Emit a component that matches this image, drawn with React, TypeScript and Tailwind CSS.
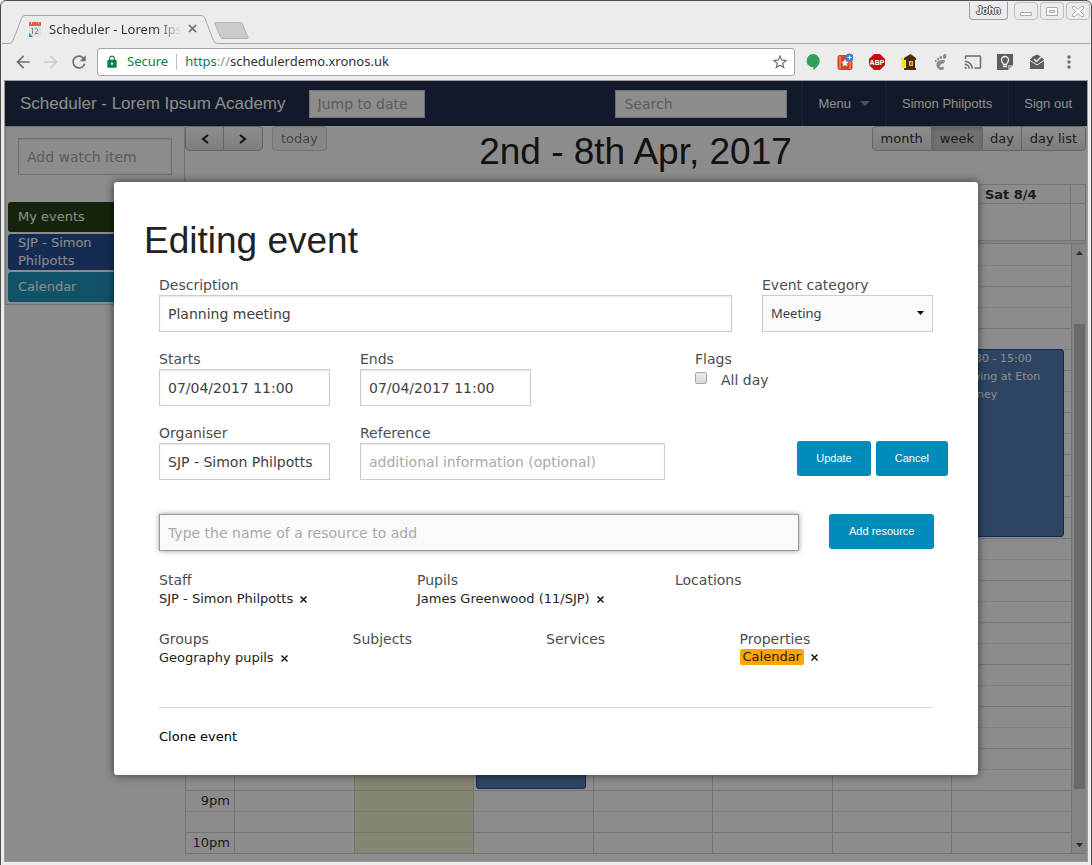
import React from "react";
import { MdArrowBack, MdArrowForward, MdRefresh, MdLock, MdMoreVert, MdStarBorder, MdCast } from "react-icons/md";

const COLS = "grid-cols-[49px_repeat(7,minmax(0,1fr))_15px]";
const DAYS = ["Sun 2/4", "Mon 3/4", "Tue 4/4", "Wed 5/4", "Thu 6/4", "Fri 7/4", "Sat 8/4"];
const HOURS = ["8am", "9am", "10am", "11am", "12pm", "1pm", "2pm", "3pm", "4pm", "5pm", "6pm", "7pm", "8pm", "9pm", "10pm"];

const CHROME_FONT = "font-['Noto_Sans',sans-serif]";
const ARIAL = "font-['Liberation_Sans',sans-serif]";
const FIELD =
  "block h-[37px] w-full border border-[#cccccc] bg-white px-2 text-sm text-[#404040] shadow-[inset_0_1px_2px_rgba(0,0,0,0.1)] outline-none placeholder:text-[#a9a9a9]";
const NAV_FIELD =
  "h-7 border border-[#cccccc] bg-white px-2 font-['DejaVu_Sans',sans-serif] text-sm placeholder:text-[#a9a9a9]";
const LABEL = "block pt-[2px] text-sm leading-[19px] text-[#4d4d4d]";

function TabStrip() {
  return (
    <div className="relative flex h-[42px] items-end">
      <svg className="absolute bottom-0 left-0 h-[29px] w-full" aria-hidden="true">
        <path d="M0 28.500H7q3 0 4-3L19.500 3.500Q20.800.5 23 .5H199.500q2.500 0 3.500 3L211.500 25.500q1 3 4 3H2000V30H0z" fill="#ececec" stroke="#a6a6a6" />
        <path d="M213.500 7.500H238q2 0 2.500 1.500l5.500 13q.5 1.500-1.500 1.500H221q-2 0-2.500-1.500l-5.500-13q-.5-1.500.5-1.500z" fill="#cbcbcb" stroke="#b2b2b2" />
      </svg>
      <div className={`relative flex h-[29px] items-center pb-[2px] pl-[27px] ${CHROME_FONT}`}>
        <svg width="12" height="16" viewBox="0 0 12 16" aria-hidden="true">
          <path d="M0 2h12v14H0z" fill="#e2e2e2" />
          <path d="M0 1h12v4H0z" fill="#df5f4c" />
          <path d="M2 0h1v3H2zM9 0h1v3H9z" fill="#f7cbc3" />
          <path d="M0 12v4h4z" fill="#3c88b5" />
          <path d="M2.500 8l1-1v6M6 8q1.500-1.500 2.500 0T6 12.500h3" fill="none" stroke="#858585" />
        </svg>
        <span className="ml-2 bg-linear-to-r from-[#303030] from-80% to-transparent bg-clip-text text-[13px] leading-5 whitespace-nowrap text-transparent">
          Scheduler - Lorem Ips
        </span>
        <button aria-label="Close tab" className="ml-[6px]">
          <svg width="9" height="9" viewBox="0 0 9 9" aria-hidden="true">
            <path d="M1 1l7 7M8 1l-7 7" stroke="#6a6a6a" strokeWidth="1.700" />
          </svg>
        </button>
      </div>
      <div className={`absolute top-0 right-0 flex items-start gap-[2px] ${ARIAL}`}>
        <button className="mr-1 h-[18px] w-[39px] rounded-b border border-t-0 border-[#9d9d9d] text-[10px] leading-[18px] font-bold text-white [text-shadow:1px_0_#4a4a4a,-1px_0_#4a4a4a,0_1px_#4a4a4a,0_-1px_#4a4a4a]">
          John
        </button>
        {[
          <path key="a" d="M5.500 9.500h11v3h-11z" />,
          <path key="b" d="M5.500 4.500h11v8h-11zM8.500 7.500h5v2h-5z" />,
          <path key="c" d="M5.500 3.500h2.500l3 3 3-3h2.500v2l-3 3 3 3v2H14l-3-3-3 3H5.500v-2l3-3-3-3z" />,
        ].map((shape, i) => (
          <button key={i} aria-label={["Minimise", "Maximise", "Close"][i]} className="h-[18px] w-6 rounded-sm border border-[#bebebe]">
            <svg width="22" height="16" viewBox="0 0 22 16" fill="#fafafa" stroke="#ababab" aria-hidden="true">
              {shape}
            </svg>
          </button>
        ))}
      </div>
    </div>
  );
}

function Extensions() {
  return (
    <div className="flex items-center gap-4 text-[#6b6b6b]">
      <svg width="16" height="18" viewBox="0 0 16 18" aria-label="Hangouts">
        <path d="M8 1a6.700 6.700 0 0 1 6.700 6.700C14.700 12 11 15 8.500 17v-2.600A6.700 6.700 0 1 1 8 1z" fill="#2fa05a" />
      </svg>
      <svg width="16" height="18" viewBox="0 0 16 18" aria-label="Bookmarks">
        <rect x=".5" y="2" width="15" height="15" rx="2.500" fill="#d84325" />
        <path d="M3 3v13M13 3v13" stroke="#f3a890" />
        <path d="M8 6l1.200 2.500 2.600.3-1.900 1.900.5 2.700L8 12l-2.400 1.400.5-2.700-1.900-1.900 2.600-.3z" fill="#fff" />
        <circle cx="12.500" cy="4.500" r="4" fill="#2d86de" />
        <path d="M12.500 2.500v4M10.500 4.500h4" stroke="#fff" />
      </svg>
      <svg width="16" height="16" viewBox="0 0 16 16" aria-label="Ad block">
        <path d="M5 0h6l5 5v6l-5 5H5l-5-5V5z" fill="#c70d0c" />
        <text x="8" y="10.800" textAnchor="middle" fontSize="7" fontWeight="700" fill="#fff" fontFamily="Liberation Sans">ABP</text>
      </svg>
      <svg width="16" height="18" viewBox="0 0 16 18" aria-label="Lantern">
        <path d="M0 4l3 2 2 2v5l-3 2-2 1 1-3-1-2 1-2-1-2z" fill="#f7e018" />
        <path d="M9.500 1l5.500 4v2h-1v8h1v2H3v-2h2V7H3V5z" fill="#4a2c0b" />
        <path d="M8 8h4v5H8z" fill="#e3c320" />
        <path d="M9 9h2v3H9z" fill="#4a2c0b" />
        <path d="M9.500 9h1v3h-1z" fill="#e3c320" />
      </svg>
      <svg width="16" height="18" viewBox="0 0 16 18" fill="#8a8a8a" aria-label="Gnome">
        <ellipse cx="11.800" cy="3.500" rx="1.700" ry="2.600" transform="rotate(15 12 3)" />
        <ellipse cx="7.800" cy="4.500" rx="1.200" ry="1.800" />
        <ellipse cx="5" cy="6" rx="1" ry="1.500" transform="rotate(-15 5 6)" />
        <ellipse cx="2.800" cy="8" rx=".8" ry="1.200" transform="rotate(-25 3 8)" />
        <path d="M12 8c0-1.500-8-1.500-8.500 3-.4 3.500 2.500 6 5 6s3-2.500 2-3c-1.500-.7-2 .8-3.200.2-1.500-1 0-2.700 1.500-3.200S12 9.500 12 8z" />
      </svg>
      <MdCast size={18} className="-mx-px" aria-label="Cast" />
      <svg width="16" height="16" viewBox="0 0 16 16" aria-label="Keep">
        <path d="M0 0h16v11l-5 5H0z" fill="#5d5d5d" />
        <path d="M11 16v-5h5z" fill="#a8a8a8" />
        <path d="M6 12.500h4M6.500 10.500h3c0-1.500 2-2 2-4.500a3.500 3.500 0 0 0-7 0c0 2.500 2 3 2 4.500z" fill="none" stroke="#f4f4f4" strokeWidth="1.300" />
      </svg>
      <svg width="16" height="18" viewBox="0 0 16 18" aria-label="Inbox">
        <path d="M1 6.500l3-2.500h8l3 2.500V16H1z" fill="#5d5d5d" />
        <path d="M3 8V4l5-2.500L13 4v4l-5 3z" fill="#5d5d5d" />
        <path d="M1 7.500l7 4.500 7-4.500" fill="none" stroke="#ececec" />
        <path d="M5 6l2.500 2.500L13 3" fill="none" stroke="#ececec" strokeWidth="1.500" />
      </svg>
      <MdMoreVert size={20} className="-mx-[2px]" aria-label="More" />
    </div>
  );
}

function Toolbar() {
  return (
    <div className={`flex h-9 items-center pr-[13px] pl-[11px] ${CHROME_FONT}`}>
      <button aria-label="Back"><MdArrowBack size={20} color="#6e6e6e" /></button>
      <button aria-label="Forward" className="ml-2"><MdArrowForward size={20} color="#cdcdcd" /></button>
      <button aria-label="Reload" className="ml-2"><MdRefresh size={20} color="#6e6e6e" /></button>
      <div className="mr-[10px] ml-2 flex h-7 min-w-0 flex-1 items-center rounded-[3px] border border-[#a5a5a5] bg-white pr-[5px] pl-[7px] text-[13px]">
        <MdLock size={14} color="#0b8043" />
        <span className="ml-2 text-[#0b8043]">Secure</span>
        <span className="mx-2 h-4 w-px bg-[#bdbdbd]" />
        <span className="flex-1 text-[#303030]">
          <span className="text-[#0b8043]">https</span>
          <span className="text-[#8c8c8c]">://</span>schedulerdemo.xronos.uk
        </span>
        <MdStarBorder size={18} color="#6e6e6e" />
      </div>
      <Extensions />
    </div>
  );
}

function NavBar() {
  const item = "flex h-full items-center border-l border-[#2c426b]";
  return (
    <nav className={`flex h-[45px] items-center bg-[#222f4b] text-[13px] text-white ${ARIAL}`}>
      <span className="pl-[15px] text-[17px]">Scheduler - Lorem Ipsum Academy</span>
      <input aria-label="Jump to date" placeholder="Jump to date" className={`${NAV_FIELD} ml-[23px] w-[116px]`} />
      <input aria-label="Search" placeholder="Search" className={`${NAV_FIELD} mr-[15px] ml-auto w-[172px]`} />
      <button className={`${item} px-[15px]`}>
        Menu
        <svg width="10" height="5" className="ml-[9px]" aria-hidden="true"><path d="M0 0h10L5 5z" fill="#8d939f" /></svg>
      </button>
      <a href="#" className={`${item} px-4`}>Simon Philpotts</a>
      <a href="#" className={`${item} px-[15px]`}>Sign out</a>
    </nav>
  );
}

function Sidebar() {
  const item = "flex items-center rounded-[3px] pr-14 pl-[10px] text-[13px] leading-[18px] text-white";
  return (
    <aside className="w-[180px] shrink-0">
      <div className="border border-[#d0d0d0] px-[2px] pb-[2px]">
        <div className="px-[10px] pt-[11px] pb-[27px]">
          <input aria-label="Add watch item" placeholder="Add watch item" className={FIELD} />
        </div>
        <div className="flex flex-col gap-[2px]">
          <div className={`${item} h-[30px] bg-[#28431a]`}>My events</div>
          <div className={`${item} h-9 bg-[#25509a]`}>SJP - Simon Philpotts</div>
          <div className={`${item} h-[30px] bg-[#1e97bd]`}>Calendar</div>
        </div>
      </div>
    </aside>
  );
}

function CalendarHeader() {
  const btn = "h-[25px] border border-[#bbbbbb] text-[13px] text-[#333333]";
  const raised = "bg-linear-to-b from-white to-[#e6e6e6]";
  const chevron = (d: string) => (
    <svg width="8" height="10" viewBox="0 0 8 10" className="mx-auto" aria-hidden="true">
      <path d={d} fill="none" stroke="#222" strokeWidth="2" />
    </svg>
  );
  return (
    <div className="grid h-[58px] grid-cols-[1fr_auto_1fr] items-start">
      <div className="flex">
        <button aria-label="Previous week" className={`${btn} ${raised} w-[39px] rounded-l`}>{chevron("M7 1L2 5l5 4")}</button>
        <button aria-label="Next week" className={`${btn} ${raised} -ml-px w-10 rounded-r`}>{chevron("M1 1l5 4-5 4")}</button>
        <button className={`${btn} ml-[9px] rounded bg-[#f0f0f0] px-2 opacity-65`}>today</button>
      </div>
      <h2 className={`text-[37px] leading-[52px] text-[#222222] ${ARIAL}`}>2nd - 8th Apr, 2017</h2>
      <div className="flex justify-end">
        <button className={`${btn} ${raised} rounded-l px-2`}>month</button>
        <button className={`${btn} -ml-px bg-[#cccccc] px-2 shadow-[inset_0_2px_4px_rgba(0,0,0,0.15)]`}>week</button>
        <button className={`${btn} ${raised} -ml-px px-[7px]`}>day</button>
        <button className={`${btn} ${raised} -ml-px rounded-r px-2`}>day list</button>
      </div>
    </div>
  );
}

function Calendar() {
  const cell = "border-l border-[#d4d4d4]";
  return (
    <section className="flex min-w-0 flex-1 flex-col pr-[1px] pb-[7px]">
      <CalendarHeader />
      <div className="flex flex-1 flex-col border-b border-[#d4d4d4]">
        <div className={`grid h-5 border-y border-r border-[#d4d4d4] text-center text-[13px] leading-[19px] font-bold text-[#333333] ${COLS}`}>
          <div className={cell} />
          {DAYS.map((d) => <div key={d} className={cell}>{d}</div>)}
          <div className={cell} />
        </div>
        <div className={`grid h-[37px] border-r border-b border-[#d4d4d4] ${COLS}`}>
          <div className={cell} />
          {DAYS.map((d, i) => <div key={d} className={i === 1 ? `${cell} bg-[#f4f1cf]` : cell} />)}
          <div className={cell} />
        </div>
        <div className="h-[3px] border-b border-[#d4d4d4] bg-[#eeeeee]" />
        <div className="flex flex-1">
          <table className="flex-1 table-fixed border-separate border-spacing-0 text-[13px] text-[#333333]">
            <tbody>
              {HOURS.flatMap((hour, h) =>
                [0, 1].filter((half) => h * 2 + half < 29).map((half) => (
                  <tr key={hour + half} className="h-[21px]">
                    <th scope="row" className={`w-[49px] border-l border-[#d4d4d4] p-0 pr-1 text-right leading-5 font-normal ${half ? "border-t [border-top-style:dotted]" : h ? "border-t" : ""}`}>
                      {half ? "" : hour}
                    </th>
                    {DAYS.map((d, i) => (
                      <td key={d} className={`relative border-l border-[#d4d4d4] p-0 ${i === 1 ? "bg-[#f4f1cf]" : ""} ${half ? "border-t [border-top-style:dotted]" : h ? "border-t" : ""}`}>
                        {i === 6 && h === 2 && half === 1 && (
                          <div className="absolute top-[-1px] right-[7px] left-[2px] z-10 h-[188px] rounded-[3px] border border-[#1f4a94] bg-[#537db4] px-[2px] text-[11px] leading-[18px] text-white">
                            <div>10:30 - 15:00</div>
                            <div>Rowing at Eton Dorney</div>
                          </div>
                        )}
                        {i === 2 && h === 11 && half === 0 && (
                          <div className="absolute top-0 right-[7px] left-[2px] z-10 h-[82px] rounded-[3px] border border-[#1f4a94] bg-[#537db4]" />
                        )}
                      </td>
                    ))}
                  </tr>
                )),
              )}
            </tbody>
          </table>
          <div className="flex w-[15px] flex-col items-center border-l border-[#d4d4d4] bg-[#f1f1f1]">
            <svg width="7" height="4" className="mt-[7px]" aria-hidden="true"><path d="M0 4h7L3.500 0z" fill="#505050" /></svg>
            <div className="mt-[69px] mb-[54px] w-[11px] flex-1 bg-[#c1c1c1]" />
            <svg width="7" height="4" className="mb-[6px]" aria-hidden="true"><path d="M0 0h7L3.500 4z" fill="#505050" /></svg>
          </div>
        </div>
      </div>
    </section>
  );
}

function Resource({ title, name, tag }: { title: string; name?: string; tag?: boolean }) {
  return (
    <div>
      <h3 className={LABEL}>{title}</h3>
      {name && (
        <div className="flex items-center text-[13px] leading-[18px] text-[#222222]">
          <span className={tag ? "rounded-[2px] bg-[#ffa500] px-[3px] leading-4" : ""}>{name}</span>
          <button aria-label={`Remove ${name}`} className="ml-[7px] text-black">
            <svg width="7" height="7" viewBox="0 0 7 7" aria-hidden="true"><path d="M.5.5l6 6M6.500.5l-6 6" stroke="currentColor" strokeWidth="1.300" /></svg>
          </button>
        </div>
      )}
    </div>
  );
}

function EventDialog() {
  const button = `h-[35px] rounded-[3px] bg-[#008cba] text-[11px] text-white ${ARIAL}`;
  return (
    <div role="dialog" aria-labelledby="title" className="absolute inset-x-[109px] top-[101px] z-30 rounded-[3px] bg-white px-[30px] pt-[33px] pb-[29px] shadow-[0_0_10px_rgba(0,0,0,0.6)]">
      <h1 id="title" className={`text-[37px] leading-[52px] text-[#222222] ${ARIAL}`}>Editing event</h1>
      <form className="mt-[7px] px-[15px]">
        <div className="grid grid-cols-12 gap-x-[30px] gap-y-4">
          <div className="col-span-9">
            <label htmlFor="desc" className={LABEL}>Description</label>
            <input id="desc" defaultValue="Planning meeting" className={FIELD} />
          </div>
          <div className="relative col-span-3">
            <label htmlFor="cat" className={LABEL}>Event category</label>
            <select id="cat" className="block h-[37px] w-full appearance-none border border-[#cccccc] bg-[#fafafa] px-2 font-['Noto_Sans',sans-serif] text-[13px] text-[#404040]">
              <option>Meeting</option>
            </select>
            <svg width="7" height="4" className="absolute right-[9px] bottom-[17px]" aria-hidden="true"><path d="M0 0h7L3.500 4z" /></svg>
          </div>
          <div className="col-span-3">
            <label htmlFor="starts" className={LABEL}>Starts</label>
            <input id="starts" defaultValue="07/04/2017 11:00" className={FIELD} />
          </div>
          <div className="col-span-3">
            <label htmlFor="ends" className={LABEL}>Ends</label>
            <input id="ends" defaultValue="07/04/2017 11:00" className={FIELD} />
          </div>
          <fieldset className="col-span-4 col-start-9">
            <legend className={LABEL}>Flags</legend>
            <div className="flex items-center">
              <input id="allday" type="checkbox" className="mb-1 h-3 w-3 appearance-none rounded-[2px] border border-[#a5a5a5] bg-linear-to-b from-[#ececec] to-[#d9d9d9]" />
              <label htmlFor="allday" className={`ml-[14px] ${LABEL}`}>All day</label>
            </div>
          </fieldset>
          <div className="col-span-3">
            <label htmlFor="org" className={LABEL}>Organiser</label>
            <input id="org" defaultValue="SJP - Simon Philpotts" className={FIELD} />
          </div>
          <div className="col-span-5">
            <label htmlFor="ref" className={LABEL}>Reference</label>
            <input id="ref" placeholder="additional information (optional)" className={FIELD} />
          </div>
          <div className="col-span-4 -mr-[15px] flex items-end justify-end gap-[5px] pb-1">
            <button type="button" className={`${button} px-[19px]`}>Update</button>
            <button type="button" className={`${button} px-[19px]`}>Cancel</button>
          </div>
        </div>
        <div className="mt-[34px] grid grid-cols-12 gap-x-[30px]">
          <input aria-label="Resource name" placeholder="Type the name of a resource to add" className="col-span-10 h-[37px] border border-[#999999] bg-[#fafafa] px-2 text-sm shadow-[0_0_5px_#999999] outline-none placeholder:text-[#a9a9a9]" />
          <div className="col-span-2">
            <button type="button" className={`${button} px-5 whitespace-nowrap`}>Add resource</button>
          </div>
        </div>
        <div className="mt-[18px] grid grid-cols-3">
          <Resource title="Staff" name="SJP - Simon Philpotts" />
          <Resource title="Pupils" name="James Greenwood (11/SJP)" />
          <Resource title="Locations" />
        </div>
        <div className="mt-5 grid grid-cols-4">
          <Resource title="Groups" name="Geography pupils" />
          <Resource title="Subjects" />
          <Resource title="Services" />
          <Resource title="Properties" name="Calendar" tag />
        </div>
        <hr className="mt-10 border-[#dddddd]" />
        <a href="#" className="mt-5 block text-[13px] leading-[18px] text-black">Clone event</a>
      </form>
    </div>
  );
}

export default function App() {
  return (
    <div className="flex min-h-screen flex-col rounded-t-md border border-[#4d4d4d] bg-[#ececec] p-[1px] font-['DejaVu_Sans',sans-serif]">
      <TabStrip />
      <Toolbar />
      <main className="relative mx-[2px] mb-[2px] flex flex-1 flex-col border border-[#9b9b9b] bg-white">
        <NavBar />
        <div className="flex flex-1">
          <Sidebar />
          <Calendar />
        </div>
        <div className="absolute inset-0 z-20 bg-black/45" />
        <EventDialog />
      </main>
    </div>
  );
}
